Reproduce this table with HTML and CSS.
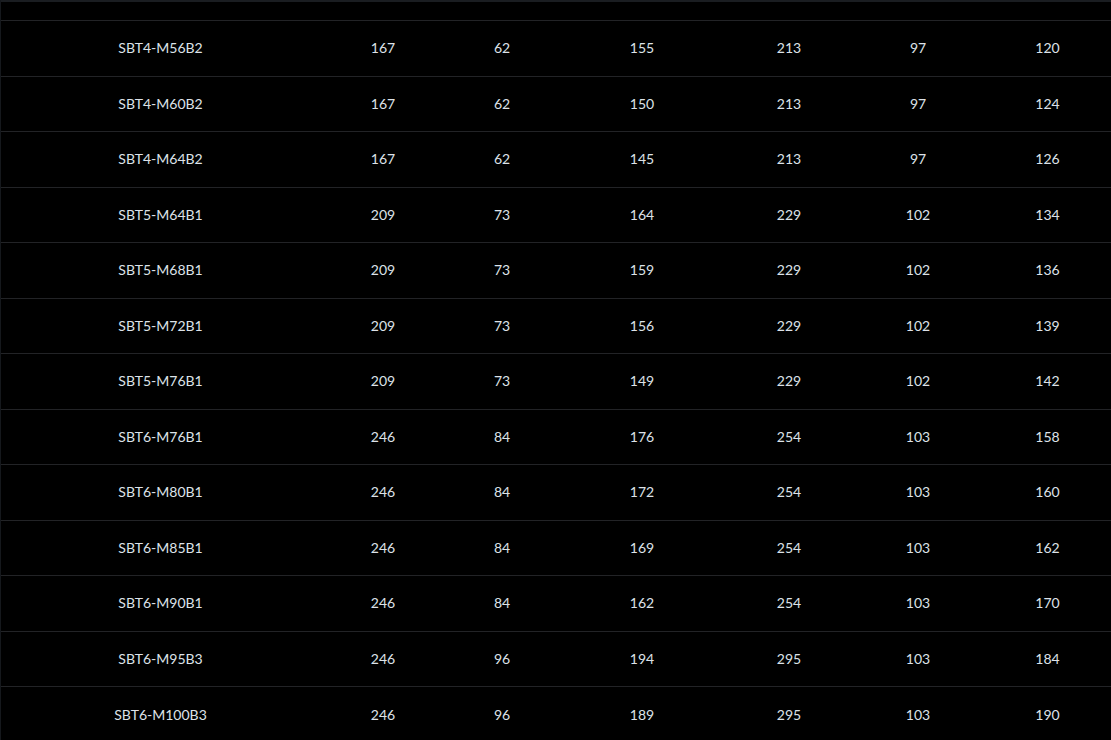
FILE: index.html
```html
<!DOCTYPE html>
<html>
<head>
<meta charset="utf-8">
<link rel="stylesheet" href="styles.css">
</head>
<body>
<div class="wrap">
  <div class="top-row"></div>
  <table class="spec">
    <colgroup>
      <col class="c1"><col class="c2"><col class="c3"><col class="c4"><col class="c5"><col class="c6"><col class="c7">
    </colgroup>
    <tbody>
      <tr><td>SBT4-M56B2</td><td>167</td><td>62</td><td>155</td><td>213</td><td>97</td><td>120</td></tr>
      <tr><td>SBT4-M60B2</td><td>167</td><td>62</td><td>150</td><td>213</td><td>97</td><td>124</td></tr>
      <tr><td>SBT4-M64B2</td><td>167</td><td>62</td><td>145</td><td>213</td><td>97</td><td>126</td></tr>
      <tr><td>SBT5-M64B1</td><td>209</td><td>73</td><td>164</td><td>229</td><td>102</td><td>134</td></tr>
      <tr><td>SBT5-M68B1</td><td>209</td><td>73</td><td>159</td><td>229</td><td>102</td><td>136</td></tr>
      <tr><td>SBT5-M72B1</td><td>209</td><td>73</td><td>156</td><td>229</td><td>102</td><td>139</td></tr>
      <tr><td>SBT5-M76B1</td><td>209</td><td>73</td><td>149</td><td>229</td><td>102</td><td>142</td></tr>
      <tr><td>SBT6-M76B1</td><td>246</td><td>84</td><td>176</td><td>254</td><td>103</td><td>158</td></tr>
      <tr><td>SBT6-M80B1</td><td>246</td><td>84</td><td>172</td><td>254</td><td>103</td><td>160</td></tr>
      <tr><td>SBT6-M85B1</td><td>246</td><td>84</td><td>169</td><td>254</td><td>103</td><td>162</td></tr>
      <tr><td>SBT6-M90B1</td><td>246</td><td>84</td><td>162</td><td>254</td><td>103</td><td>170</td></tr>
      <tr><td>SBT6-M95B3</td><td>246</td><td>96</td><td>194</td><td>295</td><td>103</td><td>184</td></tr>
      <tr><td>SBT6-M100B3</td><td>246</td><td>96</td><td>189</td><td>295</td><td>103</td><td>190</td></tr>
    </tbody>
  </table>
</div>
</body>
</html>
```
FILE: styles.css
```css
html, body {
  margin: 0;
  padding: 0;
  background: #000;
  overflow: hidden;
}
.wrap {
  width: 1111px;
  height: 740px;
  border-left: 1px solid #15181c;
  box-sizing: border-box;
  overflow: hidden;
}
.top-row {
  height: 18px;
  border-top: 2px solid #1a1d21;
}
.spec {
  width: 1110px;
  border-collapse: collapse;
  table-layout: fixed;
  font-family: "Lato", "Open Sans", sans-serif;
  font-size: 14px;
  color: #dde2e8;
}
.spec td {
  height: 55.5px;
  padding: 0 0 1px 0;
  text-align: center;
  vertical-align: middle;
  border-top: 1px solid #222326;
  box-sizing: border-box;
}
.c1 { width: 319px; }
.c2 { width: 126px; }
.c3 { width: 112px; }
.c4 { width: 168px; }
.c5 { width: 126px; }
.c6 { width: 132px; }
.c7 { width: 127px; }
```
